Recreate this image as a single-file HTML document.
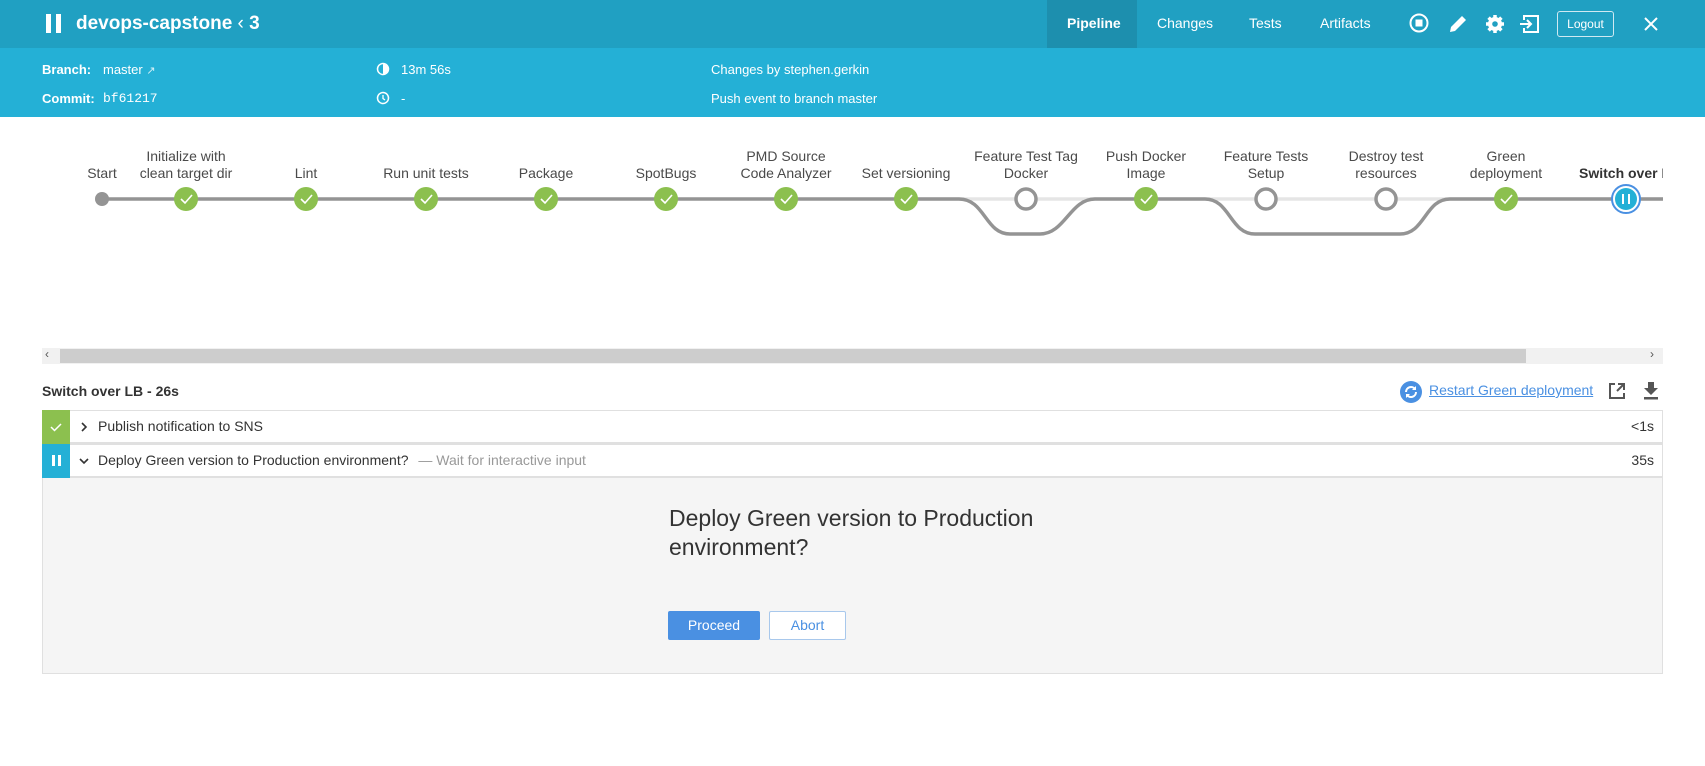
<!DOCTYPE html>
<html><head><meta charset="utf-8"><style>
*{box-sizing:border-box;margin:0;padding:0}
body{width:1705px;height:766px;overflow:hidden;background:#fff;font-family:"Liberation Sans",sans-serif;color:#4a4a4a;position:relative}
.a{position:absolute;white-space:nowrap}
#hd{position:absolute;left:0;top:0;width:1705px;height:48px;background:#20a0c2}
#sub{position:absolute;left:0;top:48px;width:1705px;height:69px;background:#24b0d6}
.w{color:#fff}
.lbl{font-size:14px;color:#4a4a4a;text-align:center;line-height:17px;width:140px;transform:translateX(-70px)}
</style></head><body>
<div id="hd">
<div class="a" style="left:46px;top:14px;width:5px;height:19px;background:#fff"></div>
<div class="a" style="left:56px;top:14px;width:5px;height:19px;background:#fff"></div>
<div class="a w" style="left:76px;top:13px;font-size:19px;font-weight:bold">devops-capstone <span style="font-weight:normal">&lsaquo;</span> 3</div>
<div class="a" style="left:1047px;top:0;width:90px;height:48px;background:#1d8fae"></div>
<div class="a w" style="left:1067px;top:15px;font-size:14px;font-weight:bold">Pipeline</div>
<div class="a w" style="left:1157px;top:15px;font-size:14px">Changes</div>
<div class="a w" style="left:1249px;top:15px;font-size:14px">Tests</div>
<div class="a w" style="left:1320px;top:15px;font-size:14px">Artifacts</div>
<svg class="a" style="left:1408px;top:12px" width="230" height="26" viewBox="0 0 230 26">
<circle cx="11" cy="11" r="8.5" fill="none" stroke="#fff" stroke-width="2"/><rect x="7.5" y="7.5" width="7" height="7" fill="#fff"/>
<path d="M42 20 l1-5 11-11 4 4-11 11z" fill="#fff"/>
<g transform="translate(87,12)" fill="#fff"><circle r="7"/><g stroke="#fff" stroke-width="3.5"><path d="M0-9V9M-9 0H9M-6.4-6.4L6.4 6.4M-6.4 6.4L6.4-6.4"/></g><circle r="2.8" fill="#20a0c2"/></g>
<path d="M116 8V4h14v16h-14v-4" fill="none" stroke="#fff" stroke-width="2"/><path d="M112 12h10M119 8l4 4-4 4" fill="none" stroke="#fff" stroke-width="2"/>
</svg>
<div class="a w" style="left:1557px;top:11px;width:57px;height:26px;border:1px solid #cfe9f2;border-radius:3px;font-size:12px;text-align:center;line-height:24px">Logout</div>
<svg class="a" style="left:1643px;top:16px" width="16" height="16"><path d="M2 2L14 14M14 2L2 14" stroke="#fff" stroke-width="2"/></svg>
</div>
<div id="sub">
<div class="a w" style="left:42px;top:14px;font-size:13px;font-weight:bold">Branch:</div>
<div class="a w" style="left:103px;top:14px;font-size:13px">master <span style="font-size:11px;opacity:.8">&#x2197;</span></div>
<div class="a w" style="left:42px;top:43px;font-size:13px;font-weight:bold">Commit:</div>
<div class="a w" style="left:103px;top:43px;font-size:13px;font-family:'Liberation Mono',monospace">bf61217</div>
<svg class="a" style="left:376px;top:14px" width="14" height="14"><circle cx="7" cy="7" r="5.5" fill="none" stroke="#fff" stroke-width="1.5"/><path d="M7 7V2A5 5 0 0 1 7 12z" fill="#fff"/></svg>
<div class="a w" style="left:401px;top:14px;font-size:13px">13m 56s</div>
<svg class="a" style="left:376px;top:43px" width="14" height="14"><circle cx="7" cy="7" r="5.5" fill="none" stroke="#fff" stroke-width="1.5"/><path d="M7 4v3.5l2 1.5" fill="none" stroke="#fff" stroke-width="1.3"/></svg>
<div class="a w" style="left:401px;top:43px;font-size:13px">-</div>
<div class="a w" style="left:711px;top:14px;font-size:13px">Changes by stephen.gerkin</div>
<div class="a w" style="left:711px;top:43px;font-size:13px">Push event to branch master</div>
</div>

<svg class="a" style="left:0;top:117px" width="1663" height="230" viewBox="0 117 1663 230">
<g fill="none" stroke-width="3.5">
<path d="M906 199H1663" stroke="#e5e5e5"/>
<path d="M102 199H959C985 199 985 234 1010 234H1040C1065 234 1070 199 1095 199H1205C1230 199 1230 234 1255 234H1400C1425 234 1425 199 1450 199H1663" stroke="#949494"/>
</g>
<circle cx="102" cy="199" r="7" fill="#949494"/>
<g fill="#8cc04f">
<circle cx="186" cy="199" r="12"/><circle cx="306" cy="199" r="12"/><circle cx="426" cy="199" r="12"/><circle cx="546" cy="199" r="12"/><circle cx="666" cy="199" r="12"/><circle cx="786" cy="199" r="12"/><circle cx="906" cy="199" r="12"/><circle cx="1146" cy="199" r="12"/><circle cx="1506" cy="199" r="12"/>
</g>
<g fill="none" stroke="#fff" stroke-width="1.6">
<path d="M181 199l4 4 7-8M301 199l4 4 7-8M421 199l4 4 7-8M541 199l4 4 7-8M661 199l4 4 7-8M781 199l4 4 7-8M901 199l4 4 7-8M1141 199l4 4 7-8M1501 199l4 4 7-8"/>
</g>
<g fill="#fff" stroke="#949494" stroke-width="3.5"><circle cx="1026" cy="199" r="10"/><circle cx="1266" cy="199" r="10"/><circle cx="1386" cy="199" r="10"/></g>
<circle cx="1626" cy="199" r="14" fill="#fff" stroke="#4a90e2" stroke-width="2"/>
<circle cx="1626" cy="199" r="11" fill="#24b0d6"/>
<path d="M1623 194v10M1629 194v10" stroke="#fff" stroke-width="2"/>
</svg>
<div class="a lbl" style="left:102px;top:165px">Start</div>
<div class="a lbl" style="left:186px;top:148px">Initialize with<br>clean target dir</div>
<div class="a lbl" style="left:306px;top:165px">Lint</div>
<div class="a lbl" style="left:426px;top:165px">Run unit tests</div>
<div class="a lbl" style="left:546px;top:165px">Package</div>
<div class="a lbl" style="left:666px;top:165px">SpotBugs</div>
<div class="a lbl" style="left:786px;top:148px">PMD Source<br>Code Analyzer</div>
<div class="a lbl" style="left:906px;top:165px">Set versioning</div>
<div class="a lbl" style="left:1026px;top:148px">Feature Test Tag<br>Docker</div>
<div class="a lbl" style="left:1146px;top:148px">Push Docker<br>Image</div>
<div class="a lbl" style="left:1266px;top:148px">Feature Tests<br>Setup</div>
<div class="a lbl" style="left:1386px;top:148px">Destroy test<br>resources</div>
<div class="a lbl" style="left:1506px;top:148px">Green<br>deployment</div>
<div class="a" style="left:1579px;top:165px;font-size:14px;font-weight:bold;color:#333;width:84px;overflow:hidden">Switch over LB</div>

<div class="a" style="left:42px;top:348px;width:1621px;height:16px;background:#f1f1f1"></div>
<div class="a" style="left:60px;top:349px;width:1466px;height:14px;background:#cdcdcd"></div>
<div class="a" style="left:45px;top:347px;font-size:12px;color:#555">&lsaquo;</div>
<div class="a" style="left:1650px;top:347px;font-size:12px;color:#555">&rsaquo;</div>

<div class="a" style="left:42px;top:383px;font-size:14px;font-weight:bold;color:#333">Switch over LB - 26s</div>
<svg class="a" style="left:1399px;top:380px" width="24" height="24"><circle cx="12" cy="12" r="11" fill="#4a90e2"/><path d="M7 12a5 5 0 0 1 9-3M17 12a5 5 0 0 1-9 3" fill="none" stroke="#fff" stroke-width="2"/><path d="M17 6v4h-4zM7 18v-4h4z" fill="#fff"/></svg>
<div class="a" style="left:1429px;top:382px;font-size:14px;color:#4a90e2;text-decoration:underline">Restart Green deployment</div>
<svg class="a" style="left:1607px;top:381px" width="20" height="20"><path d="M8 3H3v14h14v-5" fill="none" stroke="#555" stroke-width="2"/><path d="M10 10l7-7M11 3h6v6" fill="none" stroke="#555" stroke-width="2"/></svg>
<svg class="a" style="left:1642px;top:381px" width="18" height="20"><path d="M6 1h6v6h4l-7 7-7-7h4z" fill="#555"/><rect x="2" y="16" width="14" height="2.5" fill="#555"/></svg>

<div class="a" style="left:42px;top:410px;width:1621px;height:264px;border:1px solid #e0e0e0;background:#f5f5f5"></div>
<div class="a" style="left:42px;top:410px;width:1621px;height:34px;background:#fff;border:1px solid #e0e0e0;border-bottom:2px solid #e0e0e0"></div>
<div class="a" style="left:42px;top:444px;width:1621px;height:34px;background:#fff;border:1px solid #e0e0e0;border-bottom:2px solid #e0e0e0"></div>
<div class="a" style="left:42px;top:410px;width:28px;height:34px;background:#8cc04f"></div>
<svg class="a" style="left:49px;top:420px" width="14" height="14"><path d="M2 7l3.5 3.5L12 4" fill="none" stroke="#fff" stroke-width="1.5"/></svg>
<div class="a" style="left:42px;top:444px;width:28px;height:34px;background:#24b0d6"></div>
<div class="a" style="left:52px;top:455px;width:2.5px;height:11px;background:#fff"></div>
<div class="a" style="left:58px;top:455px;width:2.5px;height:11px;background:#fff"></div>
<svg class="a" style="left:79px;top:420px" width="10" height="14"><path d="M3 3l4 4-4 4" fill="none" stroke="#333" stroke-width="1.6"/></svg>
<svg class="a" style="left:78px;top:455px" width="12" height="12"><path d="M2 4l4 4 4-4" fill="none" stroke="#333" stroke-width="1.6"/></svg>
<div class="a" style="left:98px;top:418px;font-size:14px;color:#333">Publish notification to SNS</div>
<div class="a" style="left:98px;top:452px;font-size:14px;color:#333">Deploy Green version to Production environment? <span style="color:#999;margin-left:6px">— Wait for interactive input</span></div>
<div class="a" style="right:51px;top:418px;font-size:14px;color:#333">&lt;1s</div>
<div class="a" style="right:51px;top:452px;font-size:14px;color:#333">35s</div>

<div class="a" style="left:669px;top:504px;font-size:23px;color:#333;line-height:29px">Deploy Green version to Production<br>environment?</div>
<div class="a" style="left:668px;top:611px;width:92px;height:29px;background:#4a90e2;color:#fff;font-size:14px;text-align:center;line-height:29px;border-radius:2px">Proceed</div>
<div class="a" style="left:769px;top:611px;width:77px;height:29px;background:#fff;border:1px solid #a8c8ec;color:#4a90e2;font-size:14px;text-align:center;line-height:27px;border-radius:2px">Abort</div>
</body></html>
